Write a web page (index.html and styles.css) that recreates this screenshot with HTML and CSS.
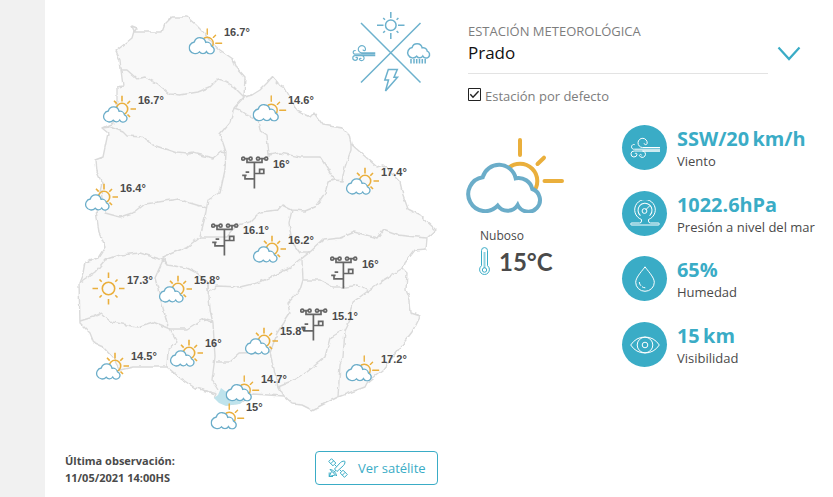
FILE: index.html
```
<!DOCTYPE html>
<html lang="es">

<head>
    <meta charset="UTF-8">
    <meta name="viewport" content="width=device-width, initial-scale=1.0">
    <title>Estado actual</title>
    <link rel="stylesheet" href="styles.css">
</head>

<body>
    <!-- iconos -->
    <svg class="defs" width="0" height="0">
        <defs>
            <path id="cloud" d="M16.7 40.3A17 17 0 1 0 31.7 68.7A12 12 0 0 0 51.7 68A11.7 11.7 0 1 0 66.3 52A14 14 0 0 0 49.7 41.3A17 17 0 0 0 16.7 40.3Z" />
            <symbol id="nuboso" viewBox="0 0 98 76">
                <g class="sun-line">
                    <circle cx="54" cy="44" r="17.3" />
                    <path d="M54 3V18M71.5 27L78 20.7M78.5 44H96" />
                </g>
                <use href="#cloud" class="cloud-line" />
            </symbol>
            <symbol id="algo" viewBox="0 0 35 28">
                <g class="sun-line small">
                    <circle cx="20" cy="14" r="5.7" />
                    <path d="M20 .8V6.6M28.5 14H34M25.3 8.8L28 6M14.7 8.6L12 5.8M25.5 19.5L28 22" />
                </g>
                <use href="#cloud" class="cloud-line" transform="translate(.9 2.9) scale(.325)" />
            </symbol>
            <symbol id="sol" viewBox="-17 -17 34 34">
                <g class="sun-line small">
                    <circle r="6.2" />
                    <path d="M0-16V-10.5M0 16V10.5M-16 0H-10.5M16 0H10.5M-9-9L-6.8-6.8M9-9L6.8-6.8M-9 9L-6.8 6.8M9 9L6.8 6.8" />
                </g>
            </symbol>
            <symbol id="torre" viewBox="0 0 28 33">
                <g class="tower-line">
                    <circle cx="2.2" cy="2.7" r="1.5" />
                    <circle cx="9.6" cy="2.7" r="1.5" />
                    <circle cx="17" cy="2.7" r="1.5" />
                    <circle cx="25.2" cy="2.7" r="1.5" />
                    <path d="M4 2.7H8M18.8 2.7H23.5M6 3V6.3H21V3M13.4 6.3V32.5M13.4 17.5H22.8V13.3H18.6V17.5M13.4 22.8H4V19.4M1.2 19.4H5.6M4.6 16.2H8.2" />
                </g>
            </symbol>
            <symbol id="viento" viewBox="0 0 30 22">
                <path d="M30 10.5H12.5A4.6 4.6 0 1 1 17.2 6.3C16.8 8.3 14 8 14.2 6.2M30 12.2H4.5A2.4 2.4 0 1 1 4.7 7.6M30 14H4.2A3 3 0 1 0 7 17.2C6.8 15.8 5 16 5.1 17M30 14H12.5A3.2 3.2 0 1 1 9.4 18.6C9.6 17 11.6 17.1 11.6 18.4" />
            </symbol>
        </defs>
    </svg>

    <div class="page">
        <div class="side"></div>

        <div class="mapa">
            <svg class="pais" width="400" height="440" viewBox="45 0 400 440">
                <filter id="costa" x="-5%" y="-5%" width="110%" height="110%" color-interpolation-filters="sRGB">
                    <feTurbulence type="fractalNoise" baseFrequency=".14" numOctaves="2" seed="4" />
                    <feDisplacementMap in="SourceGraphic" scale="4" xChannelSelector="R" yChannelSelector="G" />
                </filter>
                <g class="deptos" filter="url(#costa)">
                    <path class="contorno" d="M132 26L137 28L134 32L138 32L162 32L165 24L172 17L187 17L195 24L203 32L212 43L220 50L233 59L237 68L245 77L244 97L252 95L260 90L267 83L272 77L277 83L285 88L293 103L299 112L310 117L314 113L323 125L342 128L349 135L351 144L377 167L383 165L400 182L403 195L408 209L420 215L436 230L427 238L426 249L415 250L405 263L403 269L407 273L406 290L410 300L411 313L420 316L412 332L392 358L383 370L367 383L365 387L338 397L312 410L302 405L292 404L283 396L253 394L240 403L228 405L215 398L217 394L195 388L180 378L167 367L133 367L120 370L113 358L103 347L94 343L90 333L80 323L79 283L83 273L85 262L98 258L105 247L99 233L96 210L102 183L96 170L95 160L103 157L108 133L102 128L113 123L117 100L117 87L123 86L121 70L120 60L116 51L132 38L134 31Z" />
                    <path d="M121 70L127 70L137 79L145 77L158 84L170 94L180 95L198 92L210 87L217 80L225 82L234 87L244 97L234 108L230 123L220 135L223 143L226 152L225 170L220 193L208 200L205 217L200 237" />
                    <path d="M102 128L110 127L123 132L127 136L142 137L153 145L177 153L187 154L193 153L213 158L222 151L226 152" />
                    <path d="M102 190L105 213L120 217L135 212L145 204L172 200L178 199L190 203L207 208" />
                    <path d="M234 108L240 110L252 118L258 120L260 130L267 135L269 155L280 153L300 157L320 157L335 180L342 181L345 167L351 150L351 144" />
                    <path d="M335 180L328 182L325 193L315 207L305 211L292 210L282 205L278 210L260 212L250 222L237 225L227 237L200 237L187 247L163 257L167 265" />
                    <path d="M292 210L289 223L292 242L300 253L310 253" />
                    <path d="M427 238L397 235L383 230L377 238L355 232L340 238L323 240L310 252L300 260L290 268L260 282L240 287L217 286L208 292L208 283" />
                    <path d="M302 260L303 280L300 290L288 303L290 313L277 333L270 353L275 373L278 387L283 396" />
                    <path d="M303 280L320 280L333 287L347 287L357 285L368 291L383 280L403 268" />
                    <path d="M368 291L353 302L350 320L345 330L343 357L340 365L338 397M343 330L330 338L325 357L307 372L288 383L278 387" />
                    <path d="M80 282L95 272L105 260L120 255L140 253L163 260L167 265L187 268L197 273L208 283L210 310L213 323L215 357L212 380L218 390" />
                    <path d="M163 260L155 278L160 297L163 308L168 327L177 342L168 350L167 367" />
                    <path d="M80 321L93 317L102 313L112 322L137 327L153 322L170 329L187 329L203 319L213 322" />
                    <path d="M216 362L230 362L240 353L270 352" />
                </g>
                <path class="mvd" d="M221 388L225 391L243 400L240 404L231 405L226 406L219 403L214 398L218 395Z" />

                <g>
                    <use href="#nuboso" x="188.5" y="28" width="34" height="26.4" />
                    <use href="#algo" x="102" y="95" width="35" height="28" />
                    <use href="#nuboso" x="252.5" y="95" width="34" height="26.4" />
                    <use href="#torre" x="241" y="156" width="28" height="33" />
                    <use href="#algo" x="345" y="167" width="35" height="28" />
                    <use href="#algo" x="84" y="183" width="35" height="28" />
                    <use href="#torre" x="211" y="223" width="28" height="33" />
                    <use href="#algo" x="252" y="235" width="35" height="28" />
                    <use href="#torre" x="330" y="256" width="28" height="33" />
                    <use href="#sol" x="91.5" y="271.5" width="34" height="34" />
                    <use href="#algo" x="158" y="275" width="35" height="28" />
                    <use href="#torre" x="300" y="308" width="28" height="33" />
                    <use href="#algo" x="244" y="327" width="35" height="28" />
                    <use href="#algo" x="169" y="339" width="35" height="28" />
                    <use href="#algo" x="95" y="352" width="35" height="28" />
                    <use href="#nuboso" x="345.5" y="355" width="34" height="26.4" />
                    <use href="#nuboso" x="225.5" y="375" width="34" height="26.4" />
                    <use href="#nuboso" x="210.5" y="403" width="34" height="26.4" />
                </g>

                <g class="temps">
                    <text x="224" y="36">16.7°</text>
                    <text x="138" y="104">16.7°</text>
                    <text x="288" y="104">14.6°</text>
                    <text x="273" y="168">16°</text>
                    <text x="381" y="176">17.4°</text>
                    <text x="120" y="192">16.4°</text>
                    <text x="243" y="234">16.1°</text>
                    <text x="288" y="244">16.2°</text>
                    <text x="362" y="268">16°</text>
                    <text x="127" y="284">17.3°</text>
                    <text x="194" y="284">15.8°</text>
                    <text x="332" y="320">15.1°</text>
                    <text x="280" y="335">15.8°</text>
                    <text x="205" y="347">16°</text>
                    <text x="131" y="360">14.5°</text>
                    <text x="381" y="363">17.2°</text>
                    <text x="261" y="383">14.7°</text>
                    <text x="246" y="411">15°</text>
                </g>

                <g class="rosa">
                    <path d="M361 23L420.5 82.5M420.5 23L361 82.5" />
                    <circle cx="390.8" cy="25.3" r="5.3" />
                    <path d="M390.8 12V18M390.8 33V39M377 25.3H383.5M398 25.3H404.5M383.2 18L385 19.7M398.4 18L396.6 19.7M383.2 32.8L385 31M398.4 32.8L396.6 31" />
                    <path d="M388.3 69.5H397.3L394 77.3H397.5L385.5 91L388.5 80H384.8Z" />
                    <use href="#cloud" class="thin" transform="translate(407 35.3) scale(.305)" />
                    <path d="M411 59V63.5M414 59V63.5M416.7 59V63.5M419.5 59V63.5M422.3 59V63.5M425.2 59V63.5" />
                    <use href="#viento" x="352" y="44.5" width="23.5" height="17.5" />
                </g>
            </svg>
            <div class="pie">
                <p class="obs">Última observación:<br>11/05/2021 14:00HS</p>
                <a class="btn" href="#">
                    <svg width="20" height="20" viewBox="0 0 20 20">
                        <path d="M3.5 .7L.7 3.5L5 7.8L7.8 5ZM2.8 5.6L5.6 2.8M15 12.2L12.2 15L16.5 19.3L19.3 16.5ZM14.4 17.1L17.1 14.4M7 7L8.5 8.5M12 12L13 13" />
                        <path d="M6.5 11L12.5 4.5C14 3 16.5 3 16.8 3.3C17.2 3.7 17 6 15.5 7.5L9 13.5ZM2 11.5L8.5 18C8.5 15 5 11.5 2 11.5ZM3.5 13.5L1.2 18.5L7 17M1.2 14.5V18.5H5M5.5 14.5L8 12.3" />
                    </svg>
                    <span>Ver satélite</span>
                </a>
            </div>
        </div>

        <div class="estacion">
            <div class="selector">
                <div class="campo">
                    <label>ESTACIÓN METEOROLÓGICA</label>
                    <div class="valor">Prado</div>
                </div>
                <svg class="flecha" width="24" height="16" viewBox="0 0 24 16">
                    <path d="M1.5 1.5L12 13L22.5 1.5" />
                </svg>
            </div>
            <div class="defecto">
                <svg width="13" height="13" viewBox="0 0 13 13">
                    <path d="M.5 .5H12.5V12.5H.5Z" />
                    <path class="tick" d="M2.3 6.3L5 9.2L10.6 3.3" />
                </svg>
                <span>Estación por defecto</span>
            </div>

            <div class="detalle">
                <div class="actual">
                    <svg width="98" height="76">
                        <use href="#nuboso" width="98" height="76" />
                    </svg>
                    <p class="estado">Nuboso</p>
                    <div class="grados">
                        <svg width="11" height="29" viewBox="0 0 11 29">
                            <path d="M2.5 18.7V3.6A3 3 0 0 1 8.5 3.6V18.7A4.9 4.9 0 1 1 2.5 18.7Z" />
                            <path class="tubo" d="M5.5 5V21" />
                            <circle cx="5.5" cy="23" r="2.2" />
                        </svg>
                        <span>15°C</span>
                    </div>
                </div>
                <ul class="datos">
                    <li>
                        <span class="ico"><svg width="30" height="22"><use href="#viento" width="30" height="22" /></svg></span>
                        <div><b>SSW/20&thinsp;km/h</b><em>Viento</em></div>
                    </li>
                    <li>
                        <span class="ico">
                            <svg width="30" height="26" viewBox="0 0 30 26">
                                <path d="M11.5 19.5A10.3 10.3 0 1 1 18.5 19.5V21Q18.5 23 20.5 23H28.3A1 1 0 0 1 28.3 25H1.7A1 1 0 0 1 1.7 23H9.5Q11.5 23 11.5 21Z" />
                                <circle cx="15" cy="10.3" r="7" stroke-dasharray="34 10" transform="rotate(130 15 10.3)" />
                                <circle cx="14.5" cy="11" r="2.4" />
                                <path d="M15.5 10L20 5.5" />
                            </svg>
                        </span>
                        <div><b>1022.6hPa</b><em>Presión a nivel del mar</em></div>
                    </li>
                    <li>
                        <span class="ico">
                            <svg width="20" height="26" viewBox="0 0 20 26">
                                <path d="M10 .8C8 4 .7 11 .7 16.3A9.3 9 0 0 0 19.3 16.3C19.3 11 12 4 10 .8Z" />
                                <path d="M4.3 16A5.7 5.7 0 0 0 6 19.8M7 20.7A6 6 0 0 0 10.3 21.8" />
                            </svg>
                        </span>
                        <div><b>65%</b><em>Humedad</em></div>
                    </li>
                    <li>
                        <span class="ico">
                            <svg width="30" height="18" viewBox="0 0 30 18">
                                <path d="M.7 9Q6 1 15 1T29.3 9Q24 17 15 17T.7 9Z" />
                                <circle cx="15" cy="9" r="7.8" />
                                <circle cx="15" cy="9" r="2.8" />
                            </svg>
                        </span>
                        <div><b>15&thinsp;km</b><em>Visibilidad</em></div>
                    </li>
                </ul>
            </div>
        </div>
    </div>
</body>

</html>
```
FILE: styles.css
```
* {
    box-sizing: border-box;
    margin: 0;
    padding: 0;
}

body {
    background: #fff;
    color: #4a4a4a;
    font-family: "Open Sans", sans-serif;
    overflow: hidden;
}

svg {
    display: block;
    fill: none;
}

.defs {
    position: absolute;
}

.page {
    display: flex;
    height: 497px;
}

.side {
    width: 45px;
    background: #f1f1f1;
}

/* mapa */
.mapa {
    width: 400px;
}

.deptos path {
    stroke: #dadada;
    stroke-width: 1.4;
    stroke-linejoin: round;
}

.deptos .contorno {
    fill: #f9f9f9;
}

.mvd {
    fill: #bfe3ec;
}

.sun-line {
    fill: none;
    stroke: #eaaf3c;
    stroke-width: 4;
    stroke-linecap: round;
}

.sun-line.small {
    stroke-width: 1.6;
    stroke-linecap: butt;
}

.cloud-line {
    fill: #fff;
    stroke: #6badc9;
    stroke-width: 4;
}

.tower-line {
    stroke: #666;
    stroke-width: 1.7;
}

.temps {
    fill: #4a4a4a;
    font: bold 11px "Liberation Sans", Arial, sans-serif;
}

.rosa {
    stroke: #6cb1cd;
    stroke-width: 1.5;
}

.thin {
    stroke-width: 4.8;
}

.pie {
    display: flex;
    justify-content: space-between;
    padding: 11px 7px 0 20px;
}

.obs {
    padding-top: 1px;
    font-size: 11px;
    font-weight: bold;
    line-height: 17px;
}

.btn {
    display: flex;
    align-items: center;
    gap: 10px;
    width: 123px;
    height: 34px;
    padding-left: 12px;
    border: 1px solid #3aacc6;
    border-radius: 4px;
    color: #3aacc6;
    font-size: 13px;
    text-decoration: none;
    white-space: nowrap;
}

.btn svg {
    stroke: #3aacc6;
    stroke-width: 1;
}

/* panel de la estacion */
.estacion {
    width: 388px;
    padding: 22px 0 0 23px;
}

.selector {
    display: flex;
}

.campo {
    width: 300px;
    height: 52px;
    border-bottom: 1px solid #e3e3e3;
}

.campo label {
    display: block;
    color: #7d7d7d;
    font-size: 13px;
    line-height: 18px;
}

.valor {
    color: #111;
    font-size: 17px;
    line-height: 26px;
}

.flecha {
    margin: 24px 0 0 9px;
    stroke: #3aacc6;
    stroke-width: 2.2;
}

.defecto {
    display: flex;
    gap: 4px;
    height: 32px;
    padding-top: 14px;
    color: #7d7d7d;
    font-size: 13px;
    line-height: 16px;
}

.defecto svg {
    stroke: #222;
}

.defecto .tick {
    stroke-width: 1.4;
}

.detalle {
    display: flex;
    padding-top: 19px;
}

.actual {
    width: 154px;
    padding-top: 12px;
}

.actual > svg {
    margin-left: -2px;
}

.estado {
    padding: 14px 0 0 12px;
    font-size: 12px;
    line-height: 17px;
}

.grados {
    display: flex;
    align-items: center;
    gap: 9px;
    padding: 1px 0 0 11px;
    font-family: Lato, sans-serif;
    font-size: 24px;
    font-weight: bold;
    line-height: 30px;
}

.grados span {
    padding-top: 2px;
}

.grados svg {
    stroke: #3aacc6;
    stroke-width: 1;
}

.grados .tubo {
    stroke: #8fd0de;
    stroke-width: 2;
}

.datos {
    list-style: none;
}

.datos li {
    display: flex;
    gap: 10px;
    height: 65.7px;
    white-space: nowrap;
}

.ico {
    display: flex;
    align-items: center;
    justify-content: center;
    width: 45px;
    height: 45px;
    border-radius: 50%;
    background: #3aacc6;
    stroke: #fff;
    stroke-width: 1;
}

.datos b {
    display: block;
    color: #3aacc6;
    font-size: 19.9px;
    line-height: 28px;
}

.datos em {
    display: block;
    font-size: 13px;
    font-style: normal;
    line-height: 17px;
}
```
